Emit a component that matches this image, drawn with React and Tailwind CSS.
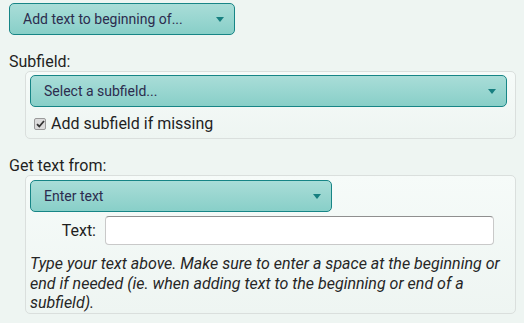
const Caret = () => (
  <svg width="8" height="5" viewBox="0 0 8 5" className="shrink-0">
    <path d="M0 0h8L4 5z" fill="#177f80" />
  </svg>
);

const Select = ({ label, className }) => (
  <div
    className={`flex h-[32px] items-center justify-between rounded-[5px] border border-[#178586] bg-gradient-to-b from-[#a9ddd8] to-[#88cfc8] pl-[13px] pr-[10px] text-[14px] text-[#2c2c4e] ${className}`}
  >
    <span>{label}</span>
    <Caret />
  </div>
);

const Box = ({ children, className }) => (
  <div
    className={`ml-[16px] w-[491px] rounded-[5px] border border-[#dadfdd] bg-gradient-to-b from-[#f6fbf9] to-[#eef5f2] ${className}`}
  >
    {children}
  </div>
);

export default function App() {
  return (
    <div
      className="h-[323px] w-[524px] overflow-hidden bg-[#eef5f2] pl-[9px] pt-[3px] text-[16px] text-[#1f1f1f]"
      style={{ fontFamily: 'Roboto, "Liberation Sans", sans-serif' }}
    >
      <Select label="Add text to beginning of..." className="w-[226px]" />

      <div className="mt-[17px] h-[19px] leading-[19px]">Subfield:</div>
      <Box className="h-[68px] pl-[4px] pt-[3px]">
        <Select label="Select a subfield..." className="w-[477px]" />
        <div className="mt-[7px] flex items-center gap-[5px] pl-[4px] leading-[20px]">
          <span className="flex h-[12px] w-[12px] items-center justify-center rounded-[2px] border border-[#9a9a9a] bg-[#dcdcdc]">
            <svg width="9" height="8" viewBox="0 0 9 8">
              <path d="M1 4.2l2.3 2.3L8 1" stroke="#333" strokeWidth="1.8" fill="none" />
            </svg>
          </span>
          <span>Add subfield if missing</span>
        </div>
      </Box>

      <div className="mt-[17px] h-[19px] leading-[19px]">Get text from:</div>
      <Box className="h-[139px] pl-[4px] pt-[4px]">
        <Select label="Enter text" className="w-[302px]" />
        <div className="mt-[4px] flex items-center">
          <span className="w-[66px] text-right">Text:</span>
          <input
            type="text"
            className="ml-[9px] h-[29px] w-[389px] rounded-[4px] border border-[#c9c9c9] border-t-[#8f8f8f] bg-white outline-none"
          />
        </div>
        <p className="mt-[9px] w-[482px] leading-[19.5px] italic text-[#262626]">
          Type your text above. Make sure to enter a space at the beginning or end if needed (ie. when adding text to the beginning or end of a subfield).
        </p>
      </Box>
    </div>
  );
}
